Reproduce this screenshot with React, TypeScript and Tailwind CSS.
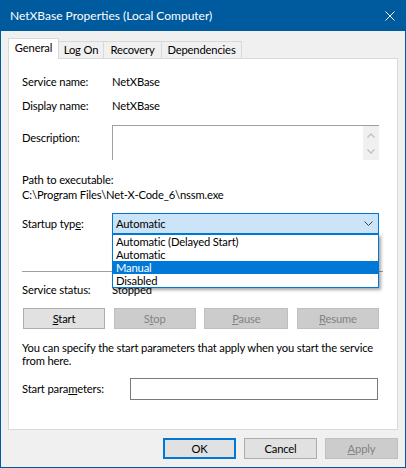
import type { ReactNode } from "react";

const tabs = ["Log On", "Recovery", "Dependencies"];
const tabWidths = ["w-[45px]", "w-[58px]", "w-[80px]"];
const options = ["Automatic (Delayed Start)", "Automatic", "Manual", "Disabled"];

function Button({
  children,
  disabled,
  primary,
  className = "",
}: {
  children: ReactNode;
  disabled?: boolean;
  primary?: boolean;
  className?: string;
}) {
  let look = "bg-[#e1e1e1] border border-[#adadad] text-black";
  if (disabled) look = "bg-[#cccccc] border border-[#bfbfbf] text-[#838383]";
  if (primary) look = "bg-[#e1e1e1] border-2 border-[#0078d7] text-black";
  return (
    <div className={`h-[21px] flex items-center justify-center ${look} ${className}`}>
      {children}
    </div>
  );
}

export default function App() {
  return (
    <div className="w-[406px] h-[468px] flex flex-col bg-[#f0f0f0] border-x border-b border-[#005a9e] text-[11.2px] tracking-[-0.15px] leading-[16px] text-black font-[Lato,sans-serif]">
      {/* title bar */}
      <div className="h-[31px] shrink-0 bg-[#005a9e] flex items-center justify-between pl-[9px] pr-[10px] text-white text-[12px] tracking-normal">
        <span>NetXBase Properties (Local Computer)</span>
        <svg width="10" height="10" viewBox="0 0 10 10">
          <path d="M0.5 0.5 L9.5 9.5 M9.5 0.5 L0.5 9.5" stroke="white" strokeWidth="1" />
        </svg>
      </div>

      <div className="flex-1 flex flex-col px-[7px] pt-[7px]">
        {/* tabs */}
        <div className="flex items-end relative z-10">
          <div className="w-[51px] h-[21px] -mb-px bg-white border-x border-t border-[#d9d9d9] flex items-center justify-center pb-[2px]">
            General
          </div>
          {tabs.map((t, i) => (
            <div
              key={t}
              className={`${tabWidths[i]} h-[17px] border-t border-r border-[#d9d9d9] flex items-center justify-center`}
            >
              {t}
            </div>
          ))}
        </div>

        {/* panel */}
        <div className="w-[390px] h-[372px] bg-white border border-[#d9d9d9] pl-[13px] pt-[15px] flex flex-col">
          <div className="flex items-center h-[16px]">
            <span className="w-[90px]">Service name:</span>
            <span>NetXBase</span>
          </div>
          <div className="flex items-center h-[16px] mt-[8px]">
            <span className="w-[90px]">Display name:</span>
            <span>NetXBase</span>
          </div>

          <div className="flex items-start mt-[11px]">
            <span className="w-[90px] pt-[5px]">Description:</span>
            <div className="w-[267px] h-[35px] border-t border-l border-[#a0a0a0] flex justify-end">
              <div className="w-[16px] h-full bg-[#f0f0f0] flex flex-col items-center justify-center gap-[11px]">
                <svg width="8" height="5" viewBox="0 0 8 5">
                  <path d="M0.5 4.5 L4 1 L7.5 4.5" fill="none" stroke="#c0c0c0" strokeWidth="1.3" />
                </svg>
                <svg width="8" height="5" viewBox="0 0 8 5">
                  <path d="M0.5 0.5 L4 4 L7.5 0.5" fill="none" stroke="#c0c0c0" strokeWidth="1.3" />
                </svg>
              </div>
            </div>
          </div>

          <div className="mt-[12px] leading-[15px]">Path to executable:</div>
          <div className="leading-[15px]">C:\Program Files\Net-X-Code_6\nssm.exe</div>

          <div className="flex items-center mt-[11px] h-[21px]">
            <span className="w-[90px]">
              Startup typ<u className="underline-offset-1">e</u>:
            </span>
            <div className="relative w-[267px] h-[21px]">
              <div className="h-full border border-[#0078d7] bg-[#cce4f7] flex items-center justify-between pl-[3px] pr-[5px]">
                <span>Automatic</span>
                <svg width="9" height="5" viewBox="0 0 9 5">
                  <path d="M0.5 0.5 L4.5 4.5 L8.5 0.5" fill="none" stroke="#404040" strokeWidth="1" />
                </svg>
              </div>
              <div className="absolute left-0 top-full w-[267px] bg-white border border-[#0078d7] shadow-[2px_2px_3px_rgba(0,0,0,0.35)] z-20">
                {options.map((o) => (
                  <div
                    key={o}
                    className={`h-[13px] leading-[13px] pl-[3px] ${o === "Manual" ? "bg-[#0078d7] text-white" : ""}`}
                  >
                    {o}
                  </div>
                ))}
              </div>
            </div>
          </div>

          <div className="mt-[37px] h-px w-[361px] bg-[#a0a0a0]" />

          <div className="flex items-center h-[16px] mt-[10px]">
            <span className="w-[90px]">Service status:</span>
            <span>Stopped</span>
          </div>

          <div className="flex justify-between mt-[10px] ml-px w-[356px]">
            <Button className="w-[82px]">
              <span><u>S</u>tart</span>
            </Button>
            <Button disabled className="w-[82px]">
              <span>S<u>t</u>op</span>
            </Button>
            <Button disabled className="w-[84px]">
              <span><u>P</u>ause</span>
            </Button>
            <Button disabled className="w-[82px]">
              <span><u>R</u>esume</span>
            </Button>
          </div>

          <p className="mt-[12px] leading-[13px] w-[362px]">
            You can specify the start parameters that apply when you start the service from here.
          </p>

          <div className="flex items-center mt-[11px] h-[22px]">
            <span className="w-[108px]">
              Start para<u>m</u>eters:
            </span>
            <div className="w-[248px] h-[22px] border border-[#7a7a7a] bg-white" />
          </div>
        </div>

        {/* footer buttons */}
        <div className="flex justify-end gap-[8px] mt-[8px]">
          <Button primary className="w-[73px]">OK</Button>
          <Button className="w-[73px]">Cancel</Button>
          <Button disabled className="w-[73px]">
            <span><u>A</u>pply</span>
          </Button>
        </div>
      </div>
    </div>
  );
}
